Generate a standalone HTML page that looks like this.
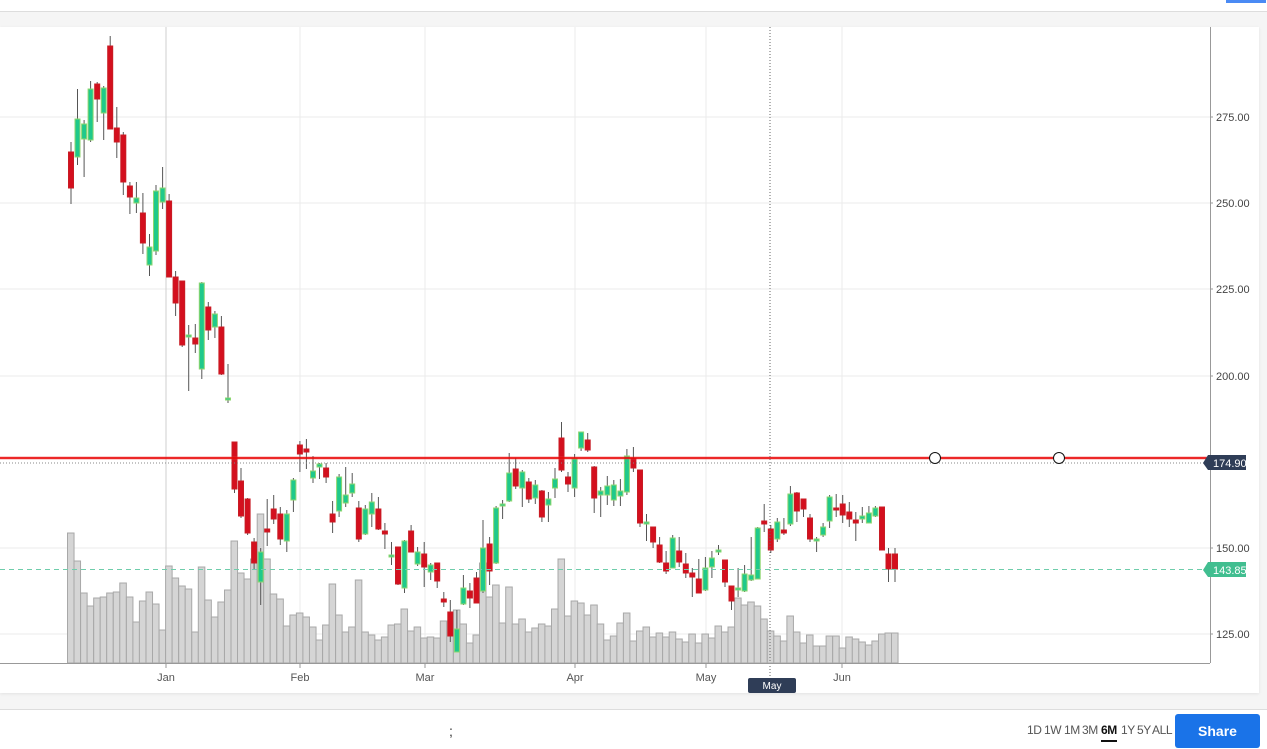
<!DOCTYPE html>
<html><head><meta charset="utf-8"><style>
html,body{margin:0;padding:0;width:1267px;height:748px;overflow:hidden;background:#f5f5f5;font-family:"Liberation Sans",sans-serif}
#top{position:absolute;left:0;top:0;width:1267px;height:11px;background:#fff;border-bottom:1px solid #ddd}
#panel{position:absolute;left:0;top:27px;width:1259px;height:666px;background:#fff;box-shadow:0 1px 3px rgba(0,0,0,.08)}
#foot{position:absolute;left:0;top:709px;width:1267px;height:39px;background:#fff;border-top:1px solid #ddd}
svg{position:absolute;left:0;top:0}
.t{position:absolute;top:723px;font-size:12px;color:#555;letter-spacing:-0.4px;white-space:nowrap}
.t.b{color:#111;font-weight:bold;border-bottom:2px solid #111;padding-bottom:3px}
.share{position:absolute;left:1175px;top:714px;width:85px;height:34px;background:#1a73e8;border-radius:3px;color:#fff;font-weight:bold;font-size:14px;text-align:center;line-height:34px}
</style></head><body>
<div id="top"></div>
<div style="position:absolute;left:1226px;top:0;width:40px;height:3px;background:#4a8af4"></div>
<div id="panel"></div>
<div id="foot"></div>
<div style="position:absolute;left:449px;top:723px;font-size:14px;color:#333">;</div>
<span class="t" style="left:1027px">1D</span><span class="t" style="left:1044px">1W</span><span class="t" style="left:1064px">1M</span><span class="t" style="left:1082px">3M</span><span class="t b" style="left:1101px">6M</span><span class="t" style="left:1121px">1Y</span><span class="t" style="left:1137px">5Y</span><span class="t" style="left:1152px">ALL</span>
<div class="share">Share</div>
<svg id="s" width="1267" height="748" xmlns="http://www.w3.org/2000/svg"></svg>
<script>
var C=[[152,188,142,204,0],[157,119,89,165,1],[139,124,120,177,1],[140,89,81,142,1],[84,99,82,122,0],[113,88,86,140,1],[46,129,36,129,0],[128,142,107,158,0],[135,182,132,195,0],[186,197,182,214,0],[203,198,182,213,1],[213,243,193,254,0],[265,247,234,276,1],[251,191,185,255,1],[202,188,167,209,1],[201,277,194,277,0],[277,303,271,316,0],[281,345,281,347,0],[337,335,325,391,1],[338,344,324,353,0],[369,283,282,379,1],[307,330,302,340,0],[327,314,311,338,1],[327,374,316,375,0],[400,398,364,403,1],
[442,489,442,493,0],[481,516,468,518,0],[499,533,498,535,0],[542,563,538,569,0],[582,552,548,605,1],[529,532,499,546,0],[509,519,495,524,0],[514,539,507,545,0],[541,514,510,552,1],[500,480,478,512,1],[445,454,441,472,0],[449,452,439,469,0],[478,471,456,483,1],[467,464,463,479,1],[468,477,463,483,0],[514,522,501,533,0],[511,477,474,517,1],[503,495,467,507,1],[493,484,473,497,1],[508,539,501,542,0],[534,509,505,535,1],[514,502,493,527,1],[509,529,497,530,0],[531,534,523,549,0],[557,555,542,565,1],[547,584,547,585,0],[588,541,540,593,1],[531,552,525,552,0],[564,552,547,566,1],[554,567,542,587,0],[572,565,563,580,1],[563,581,563,588,0],[599,602,592,607,0],[612,636,600,642,0],[652,629,610,652,1],[604,588,575,605,1],
[591,598,583,608,0],[578,603,572,603,0],[591,548,520,593,1],[544,571,537,585,0],[563,508,506,564,1],[506,504,500,519,1],[501,473,453,502,1],[469,486,458,489,0],[488,472,470,507,1],[482,499,478,503,0],[498,485,480,504,1],[491,517,490,522,0],[505,499,492,522,1],[488,479,468,498,1],[438,470,422,472,0],[477,484,472,492,0],[488,459,454,497,1],[448,432,432,451,1],[440,450,433,452,0],[467,498,466,513,0],[495,491,487,517,1],[495,486,476,505,1],[500,485,480,506,1],[496,491,479,506,1],[492,456,449,495,1],[459,468,447,472,0],[470,523,470,527,0],[524,522,514,541,1],[527,542,527,548,0],[545,562,537,563,0],[563,571,551,574,0],[568,538,535,568,1],[551,562,537,567,0],[564,573,553,578,0],
[573,577,568,597,0],[579,593,559,593,0],[590,568,557,591,1],[567,558,551,578,1],[552,550,545,555,1],[560,582,560,587,0],[586,601,586,610,0],[590,588,568,597,1],[591,574,565,592,1],[580,575,537,581,1],[579,528,527,579,1],[521,524,504,532,0],[529,550,525,553,0],[539,522,518,542,1],[530,533,518,535,0],[524,494,486,526,1],[493,511,492,522,0],[499,509,499,517,0],[518,539,514,542,0],[541,539,537,552,1],[535,527,523,537,1],[521,497,495,528,1],[508,510,494,517,0],[504,515,495,523,0],[512,519,502,527,0],[520,523,512,541,0],[519,516,507,523,1],[523,513,506,523,1],[516,508,506,517,1],[507,550,507,550,0],[554,569,548,582,0],[554,569,548,582,0]];
var V=[533,561,593,606,598,597,593,592,583,597,622,601,592,604,630,566,578,586,589,632,567,600,617,602,590,541,573,579,559,514,559,594,599,626,615,613,617,627,640,625,584,615,632,627,580,632,635,640,637,625,624,609,631,627,638,637,638,621,621,610,624,643,635,563,597,585,623,587,624,619,632,628,624,626,609,559,616,601,603,615,605,624,640,636,623,613,641,631,627,637,633,637,632,639,642,634,643,634,638,626,632,627,598,605,602,606,619,631,636,641,616,632,643,635,646,646,636,636,648,637,639,642,645,641,634,633,633];
var h='';
[117,203,289,376,548,634].forEach(function(y){h+='<line x1="0" x2="1210" y1="'+y+'" y2="'+y+'" stroke="#ebebeb"/>';});
[300,425,575,706,842].forEach(function(x){h+='<line x1="'+x+'" x2="'+x+'" y1="27" y2="663" stroke="#ebebeb"/>';});
h+='<line x1="166" x2="166" y1="27" y2="663" stroke="#cfcfcf"/>';
var dx=6.54;
for(var i=0;i<V.length;i++){var x=67.5+i*dx;h+='<rect x="'+x.toFixed(1)+'" y="'+V[i]+'" width="'+dx.toFixed(2)+'" height="'+(663-V[i])+'" fill="#d5d5d5" stroke="#a8a8a8" stroke-width="1"/>';}
for(var i=0;i<C.length;i++){var c=C[i],x=71+i*dx,t=Math.min(c[0],c[1]),b=Math.max(c[0],c[1]);if(b-t<2){b=t+2}
h+='<line x1="'+x.toFixed(1)+'" x2="'+x.toFixed(1)+'" y1="'+c[2]+'" y2="'+c[3]+'" stroke="#555" stroke-width="1"/>';
h+='<rect x="'+(x-2.5).toFixed(1)+'" y="'+t+'" width="5" height="'+(b-t)+'" fill="'+(c[4]?'#1fc98b':'#d40f1e')+'" stroke="'+(c[4]?'#8ed66f':'#c81c24')+'" stroke-width="1"/>';}
h+='<line x1="0" x2="1210" y1="463" y2="463" stroke="#888" stroke-dasharray="1,2"/>';
h+='<line x1="0" x2="1210" y1="458" y2="458" stroke="#f04848" stroke-width="3" opacity=".5"/><line x1="0" x2="1210" y1="458" y2="458" stroke="#e80000" stroke-width="1.5"/>';
h+='<circle cx="935" cy="458" r="5.5" fill="#fff" stroke="#111"/><circle cx="1059" cy="458" r="5.5" fill="#fff" stroke="#111"/>';
h+='<line x1="0" x2="1210" y1="569.5" y2="569.5" stroke="#6fcdab" stroke-dasharray="5,4"/>';
h+='<line x1="770" x2="770" y1="27" y2="678" stroke="#666" stroke-dasharray="1,2"/>';
h+='<line x1="1210.5" x2="1210.5" y1="27" y2="663" stroke="#999"/><line x1="0" x2="1210" y1="663.5" y2="663.5" stroke="#999"/>';
[[117,'275.00'],[203,'250.00'],[289,'225.00'],[376,'200.00'],[548,'150.00'],[634,'125.00']].forEach(function(a){h+='<line x1="1210" x2="1213" y1="'+a[0]+'" y2="'+a[0]+'" stroke="#999"/><text x="1216" y="'+(a[0]+4)+'" font-size="11" fill="#444" font-family="Liberation Sans">'+a[1]+'</text>';});
h+='<path d="M1203 463 L1208 455 H1246 V470 H1208 Z" fill="#2f3d57"/><text x="1213" y="467" font-size="11" fill="#fff" font-family="Liberation Sans">174.90</text>';
h+='<path d="M1203 570 L1208 562 H1246 V577 H1208 Z" fill="#41be90"/><text x="1213" y="574" font-size="11" fill="#fff" font-family="Liberation Sans">143.85</text>';
[[166,'Jan'],[300,'Feb'],[425,'Mar'],[575,'Apr'],[706,'May'],[842,'Jun']].forEach(function(a){h+='<line x1="'+a[0]+'" x2="'+a[0]+'" y1="663" y2="668" stroke="#999"/><text x="'+a[0]+'" y="681" text-anchor="middle" font-size="11" fill="#555" font-family="Liberation Sans">'+a[1]+'</text>';});
h+='<rect x="748" y="678" width="48" height="15" rx="2" fill="#2f3d57"/><text x="772" y="689" text-anchor="middle" font-size="10" fill="#fff" font-family="Liberation Sans">May</text>';
document.getElementById('s').innerHTML=h;
</script>
</body></html>
